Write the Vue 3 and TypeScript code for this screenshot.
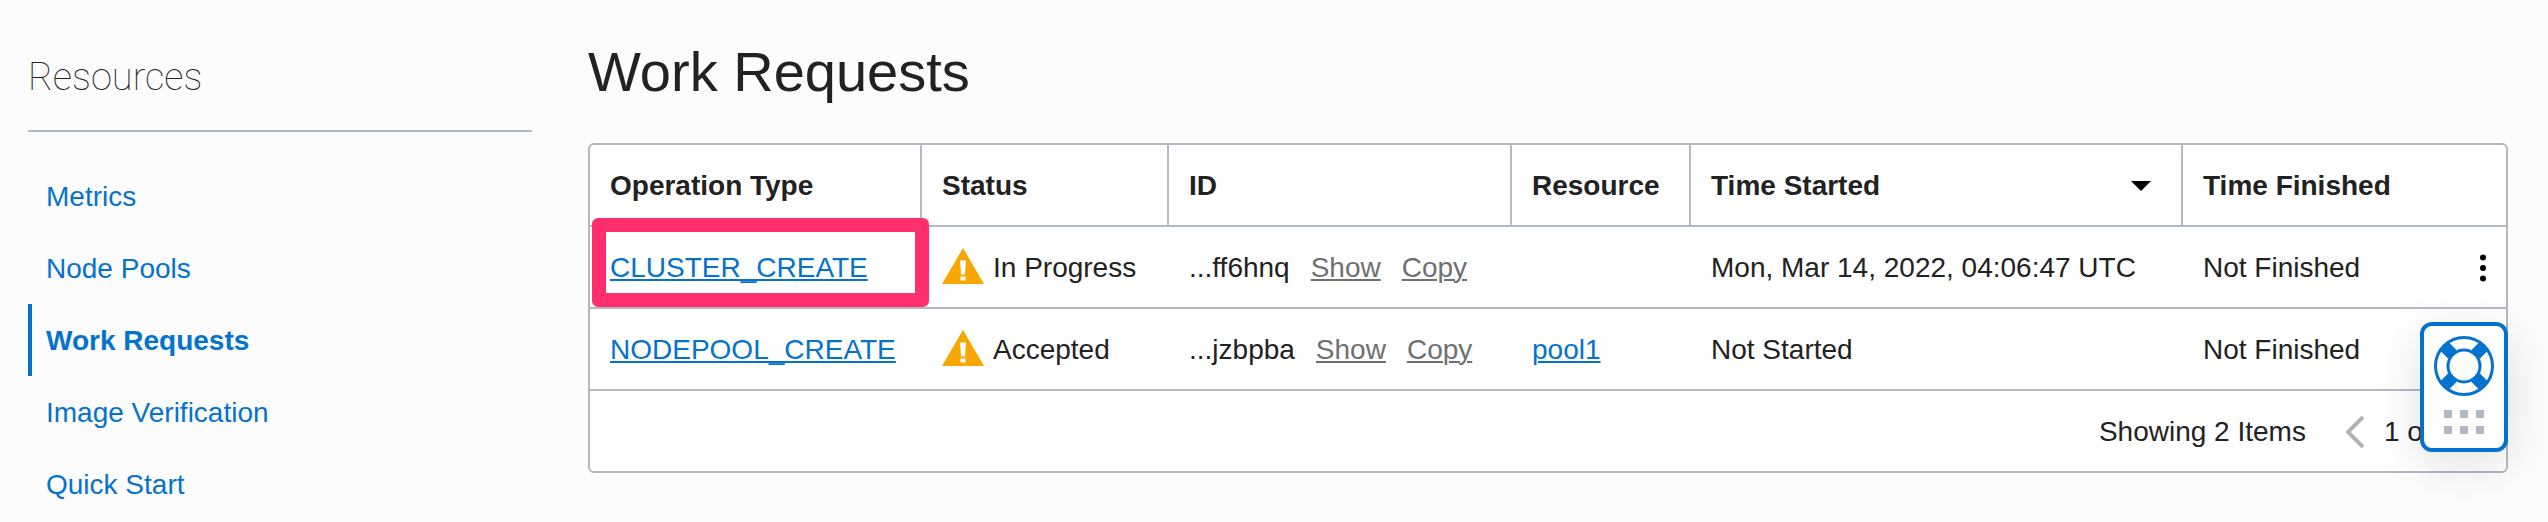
<script setup lang="ts">
interface WorkRequest {
  operation: string
  status: string
  id: string
  resource: string
  started: string
  finished: string
  highlighted: boolean
  hasMenu: boolean
}

const links: string[] = ['Metrics', 'Node Pools', 'Work Requests', 'Image Verification', 'Quick Start']
const activeLink = 'Work Requests'

const requests: WorkRequest[] = [
  {
    operation: 'CLUSTER_CREATE',
    status: 'In Progress',
    id: '...ff6hnq',
    resource: '',
    started: 'Mon, Mar 14, 2022, 04:06:47 UTC',
    finished: 'Not Finished',
    highlighted: true,
    hasMenu: true,
  },
  {
    operation: 'NODEPOOL_CREATE',
    status: 'Accepted',
    id: '...jzbpba',
    resource: 'pool1',
    started: 'Not Started',
    finished: 'Not Finished',
    highlighted: false,
    hasMenu: false,
  },
]
</script>

<template>
  <div class="page">
    <aside class="sidebar">
      <h2 class="sidebar-title">Resources</h2>
      <nav class="nav">
        <a
          v-for="link in links"
          :key="link"
          href="#"
          class="nav-link"
          :class="{ active: link === activeLink }"
        >{{ link }}</a>
      </nav>
    </aside>

    <main class="content">
      <h1 class="title">Work Requests</h1>
      <div class="card">
        <table class="requests">
          <colgroup>
            <col class="col-operation" />
            <col class="col-status" />
            <col class="col-id" />
            <col class="col-resource" />
            <col class="col-started" />
            <col />
          </colgroup>
          <thead>
            <tr>
              <th scope="col">Operation Type</th>
              <th scope="col">Status</th>
              <th scope="col">ID</th>
              <th scope="col">Resource</th>
              <th scope="col">
                <button type="button" class="sort">
                  <span>Time Started</span>
                  <svg class="caret" viewBox="0 0 20 10" aria-hidden="true"><path d="M0 0h20L10 10z" /></svg>
                </button>
              </th>
              <th scope="col">Time Finished</th>
            </tr>
          </thead>
          <tbody>
            <tr v-for="request in requests" :key="request.operation">
              <td class="operation">
                <a href="#" class="link">{{ request.operation }}</a>
                <span v-if="request.highlighted" class="highlight"></span>
              </td>
              <td>
                <span class="status">
                  <svg class="warning" viewBox="0 0 42 36" aria-hidden="true">
                    <path class="warning-body" d="M21 0L42 36H0z" />
                    <path class="warning-mark" d="M18 12.5h6l-1 14h-4zM18.5 28.5h5v4h-5z" />
                  </svg>
                  <span>{{ request.status }}</span>
                </span>
              </td>
              <td>
                <span class="identifier">
                  <span>{{ request.id }}</span>
                  <a href="#" class="link muted">Show</a>
                  <a href="#" class="link muted">Copy</a>
                </span>
              </td>
              <td><a v-if="request.resource" href="#" class="link">{{ request.resource }}</a></td>
              <td>{{ request.started }}</td>
              <td>
                <span class="finished">
                  <span>{{ request.finished }}</span>
                  <button v-if="request.hasMenu" type="button" class="menu" aria-label="Actions">
                    <svg class="kebab" viewBox="0 0 6 28" aria-hidden="true">
                      <circle cx="3" cy="3.5" r="3" />
                      <circle cx="3" cy="14" r="3" />
                      <circle cx="3" cy="24.5" r="3" />
                    </svg>
                  </button>
                </span>
              </td>
            </tr>
          </tbody>
        </table>

        <div class="pager">
          <span class="count">Showing 2 Items</span>
          <button type="button" class="page-button" aria-label="Previous page">
            <svg class="chevron" viewBox="0 0 18 32" aria-hidden="true"><path d="M17 1L2 16l15 15" /></svg>
          </button>
          <span>1 of 1</span>
          <button type="button" class="page-button" aria-label="Next page">
            <svg class="chevron" viewBox="0 0 18 32" aria-hidden="true"><path d="M1 1l15 15L1 31" /></svg>
          </button>
        </div>

        <button type="button" class="help" aria-label="Help">
          <svg class="lifebuoy" viewBox="0 0 60 60" aria-hidden="true">
            <path class="spokes" d="M18.500 18.500L10.500 10.500M41.500 18.500l8-8M18.500 41.500l-8 8M41.500 41.500l8 8" />
            <circle class="ring" cx="30" cy="30" r="28.5" />
            <circle class="ring" cx="30" cy="30" r="16" />
          </svg>
          <svg class="grip" viewBox="0 0 40 24" aria-hidden="true">
            <path d="M0 0h8v8H0zM16 0h8v8h-8zM32 0h8v8h-8zM0 16h8v8H0zM16 16h8v8h-8zM32 16h8v8h-8z" />
          </svg>
        </button>
      </div>
    </main>
  </div>
</template>

<style>
body {
  margin: 0;
  background: #fcfcfc;
}
</style>

<style scoped>
.page {
  display: grid;
  grid-template-columns: 504px minmax(0, 1fr);
  column-gap: 56px;
  padding: 0 40px 0 28px;
  color: #222;
  font-family: "Liberation Sans", Arial, sans-serif;
  font-size: 28px;
  line-height: 40px;
}

.sidebar-title {
  margin: 0 0 28px;
  padding: 53px 0 29px;
  border-bottom: 2px solid #b2b9c4;
  font-family: Roboto, sans-serif;
  font-size: 38px;
  font-weight: 100;
  line-height: 48px;
}

.nav {
  display: flex;
  flex-direction: column;
}

.nav-link {
  padding: 17px 14px 15px;
  border-left: 4px solid transparent;
  color: #0572ce;
  text-decoration: none;
}

.nav-link.active {
  border-left-color: #0572ce;
  font-weight: bold;
}

.title {
  margin: 0;
  padding: 40px 0 39px;
  font-size: 56px;
  font-weight: normal;
  line-height: 64px;
}

.card {
  position: relative;
  border: 2px solid #b2b9c4;
  border-radius: 6px;
  background: #fff;
}

.requests {
  width: 100%;
  table-layout: fixed;
  border-collapse: separate;
  border-spacing: 0;
}

.col-operation {
  width: 332px;
}

.col-status {
  width: 247px;
}

.col-id {
  width: 343px;
}

.col-resource {
  width: 179px;
}

.col-started {
  width: 492px;
}

th,
td {
  padding: 21px 20px 19px;
  border-bottom: 2px solid #b2b9c4;
  text-align: left;
  white-space: nowrap;
}

th {
  border-right: 2px solid #b2b9c4;
}

th:last-child {
  border-right: 0;
}

button {
  padding: 0;
  border: 0;
  background: none;
  color: inherit;
  font: inherit;
  cursor: pointer;
}

svg {
  display: block;
  flex: none;
}

.sort {
  display: flex;
  align-items: center;
  justify-content: space-between;
  width: 100%;
  padding-right: 10px;
}

.caret {
  width: 20px;
  height: 10px;
  fill: #000;
}

.link {
  color: #0572ce;
  text-decoration: underline;
  text-decoration-thickness: 2px;
  text-underline-offset: 2px;
}

.link.muted {
  color: #707070;
}

.operation {
  position: relative;
}

.highlight {
  position: absolute;
  inset: -9px -7px 0 2px;
  border: 14px solid #ff2f6d;
  border-radius: 6px;
  pointer-events: none;
}

.status {
  display: flex;
  align-items: flex-start;
  gap: 9px;
}

.warning {
  width: 42px;
  height: 36px;
}

.warning-body {
  fill: #f8a602;
}

.warning-mark {
  fill: #fff;
}

.identifier {
  display: flex;
  gap: 21px;
}

.finished {
  display: flex;
  align-items: center;
  justify-content: space-between;
}

.menu {
  display: flex;
}

.kebab {
  width: 6px;
  height: 28px;
}

.pager {
  display: flex;
  align-items: center;
  justify-content: flex-end;
  padding: 21px 20px 19px;
}

.count {
  margin-right: 40px;
}

.page-button {
  display: flex;
  margin-right: 20px;
}

.page-button:last-child {
  margin: 0 0 0 14px;
}

.chevron {
  width: 18px;
  height: 32px;
  fill: none;
  stroke: #b3b3b3;
  stroke-width: 4;
}

.help {
  position: absolute;
  right: -2px;
  bottom: 19px;
  display: flex;
  flex-direction: column;
  align-items: center;
  gap: 14px;
  padding: 10px 10px 14px;
  border: 4px solid #0572ce;
  border-radius: 12px;
  background: #fff;
  box-shadow: 0 12px 48px rgba(0, 0, 0, 0.12);
}

.lifebuoy {
  width: 60px;
  height: 60px;
  fill: none;
  stroke: #0572ce;
}

.spokes {
  stroke-width: 12;
}

.ring {
  stroke-width: 3;
}

.grip {
  width: 40px;
  height: 24px;
  fill: #b2b9c2;
}
</style>
